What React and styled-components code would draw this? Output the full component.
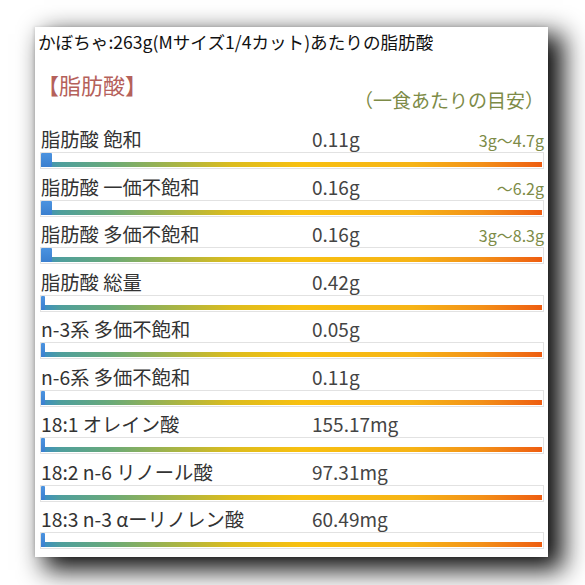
import React from 'react'
import styled, { createGlobalStyle } from 'styled-components';

const GlobalStyle = createGlobalStyle`
  html, body {
    margin: 0;
    padding: 0;
    background: #ffffff;
  }
  body {
    font-family: 'Noto Sans CJK JP', 'Noto Sans', sans-serif;
  }
`;

const Page = styled.div`
  width: 585px;
  height: 585px;
  padding: 28px 0 0 35px;
  box-sizing: border-box;
`;

const Card = styled.div`
  width: 513px;
  height: 530px;
  box-sizing: border-box;
  padding: 0 4px 0 5px;
  background: #ffffff;
  box-shadow: 12px 10px 24px 3px rgba(0, 0, 0, 0.95), -1px 0 3px rgba(0, 0, 0, 0.12);
`;

const Title = styled.div`
  font-size: 17.6px;
  line-height: 30px;
  height: 30px;
  color: #111;
  white-space: nowrap;
  margin-left: -2px;
  margin-top: -1px;
`;

const SectionHead = styled.div`
  display: flex;
  justify-content: space-between;
  align-items: flex-start;
  height: 69px;
`;

const SectionName = styled.div`
  font-size: 22px;
  line-height: 26px;
  padding-top: 14px;
  color: #b5615b;
  margin-left: -3px;
`;

const Guide = styled.div`
  font-size: 19px;
  line-height: 26px;
  padding-top: 30px;
  color: #7d8b47;
`;

const Row = styled.div`
  height: 47.5px;
`;

const Line = styled.div`
  display: flex;
  align-items: baseline;
  height: 26px;
  line-height: 26px;
  padding-left: 1px;
  white-space: nowrap;
`;

const Label = styled.span`
  width: 271px;
  font-size: 19.3px;
  color: #333;
`;

const Value = styled.span`
  flex: 1;
  font-size: 19px;
  color: #444;
`;

const Range = styled.span`
  font-size: 16px;
  color: #7d8b47;
`;

const Track = styled.div`
  position: relative;
  height: 17px;
  box-sizing: border-box;
  border: 1px solid #e2e2e2;
  display: flex;
  flex-direction: column;
  justify-content: flex-end;
  padding: 0 1px 1px 0;
`;

const Strip = styled.div`
  height: 5px;
  background: linear-gradient(
    to right,
    #3a8cc8 0%,
    #4f9f9c 4%,
    #6aaa78 14%,
    #a4b448 26%,
    #dcbc1e 38%,
    #f8c010 52%,
    #f6b416 74%,
    #f39018 88%,
    #ef6612 98%,
    #ee5c10 100%
  );
`;

const Marker = styled.div`
  position: absolute;
  left: 0;
  top: 0;
  height: 14px;
  background: linear-gradient(to bottom, #4b93e0, #3b7fcf);
  border-radius: 1px;
`;

const rows = [
  { label: '脂肪酸 飽和', value: '0.11g', range: '3g〜4.7g' },
  { label: '脂肪酸 一価不飽和', value: '0.16g', range: '〜6.2g' },
  { label: '脂肪酸 多価不飽和', value: '0.16g', range: '3g〜8.3g' },
  { label: '脂肪酸 総量', value: '0.42g', range: '' },
  { label: 'n-3系 多価不飽和', value: '0.05g', range: '' },
  { label: 'n-6系 多価不飽和', value: '0.11g', range: '' },
  { label: '18:1 オレイン酸', value: '155.17mg', range: '' },
  { label: '18:2 n-6 リノール酸', value: '97.31mg', range: '' },
  { label: '18:3 n-3 αーリノレン酸', value: '60.49mg', range: '' },
];

function App() {
  return (
    <Page>
      <GlobalStyle />
      <Card>
        <Title>かぼちゃ:263g(Mサイズ1/4カット)あたりの脂肪酸</Title>
        <SectionHead>
          <SectionName>【脂肪酸】</SectionName>
          <Guide>（一食あたりの目安）</Guide>
        </SectionHead>
        {rows.map((r, i) => (
          <Row key={i}>
            <Line>
              <Label>{r.label}</Label>
              <Value>{r.value}</Value>
              <Range>{r.range}</Range>
            </Line>
            <Track>
              <Strip />
              <Marker style={{ width: i < 3 ? 11 : 4 }} />
            </Track>
          </Row>
        ))}
      </Card>
    </Page>
  )
}

export default App;
